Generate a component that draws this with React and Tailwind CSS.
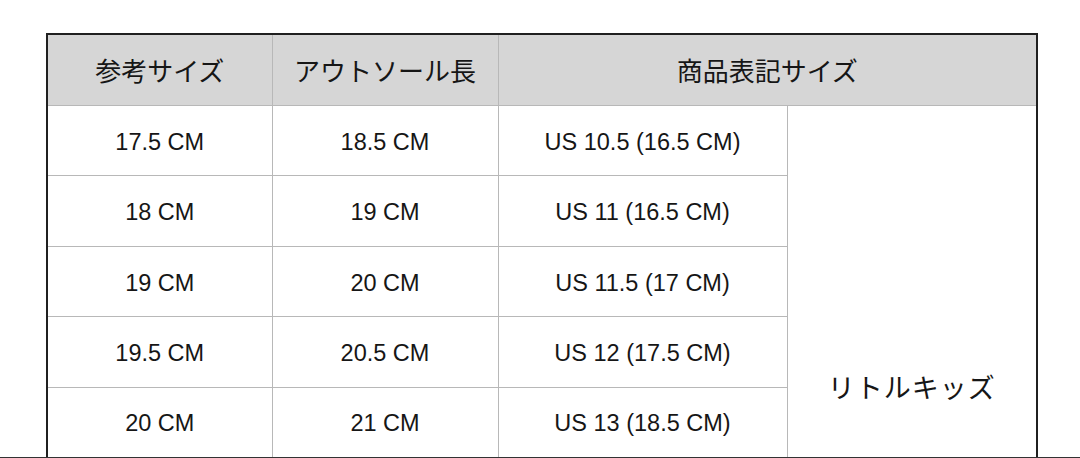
const rows = [
  ["17.5 CM", "18.5 CM", "US 10.5 (16.5 CM)"],
  ["18 CM", "19 CM", "US 11 (16.5 CM)"],
  ["19 CM", "20 CM", "US 11.5 (17 CM)"],
  ["19.5 CM", "20.5 CM", "US 12 (17.5 CM)"],
  ["20 CM", "21 CM", "US 13 (18.5 CM)"],
];

const cell = "border border-[#b8b8b8] text-center align-middle font-normal";

export default function App() {
  return (
    <div
      className="h-[458px] overflow-hidden bg-white border-b border-[#333] pl-[46px] pt-[33px] text-[#161616]"
      style={{ fontFamily: '"Liberation Sans", "Noto Sans CJK JP", sans-serif' }}
    >
      <table className="table-fixed border-collapse border-2 border-[#202020] w-[990px]">
        <colgroup>
          <col className="w-[225px]" />
          <col className="w-[226px]" />
          <col className="w-[289px]" />
          <col className="w-[250px]" />
        </colgroup>
        <thead>
          <tr className="h-[71px] bg-[#d6d6d6]">
            <th className={`${cell} text-[26px] font-['Noto_Sans_CJK_JP']`}>参考サイズ</th>
            <th className={`${cell} text-[26px] font-['Noto_Sans_CJK_JP']`}>アウトソール長</th>
            <th colSpan={2} className={`${cell} text-[26px] font-['Noto_Sans_CJK_JP']`}>
              商品表記サイズ
            </th>
          </tr>
        </thead>
        <tbody>
          {rows.map((r, i) => (
            <tr key={i} className="h-[70.5px]">
              <td className={`${cell} pt-1 text-[23.5px]`}>{r[0]}</td>
              <td className={`${cell} pt-1 text-[23.5px]`}>{r[1]}</td>
              <td className={`${cell} pt-1 text-[23.5px]`}>{r[2]}</td>
              {i === 0 && (
                <td
                  rowSpan={rows.length}
                  className={`${cell} !align-top pt-[261px] text-[27px] leading-[40px] tracking-[1px] font-['Noto_Sans_CJK_JP']`}
                >
                  リトルキッズ
                </td>
              )}
            </tr>
          ))}
        </tbody>
      </table>
    </div>
  );
}
